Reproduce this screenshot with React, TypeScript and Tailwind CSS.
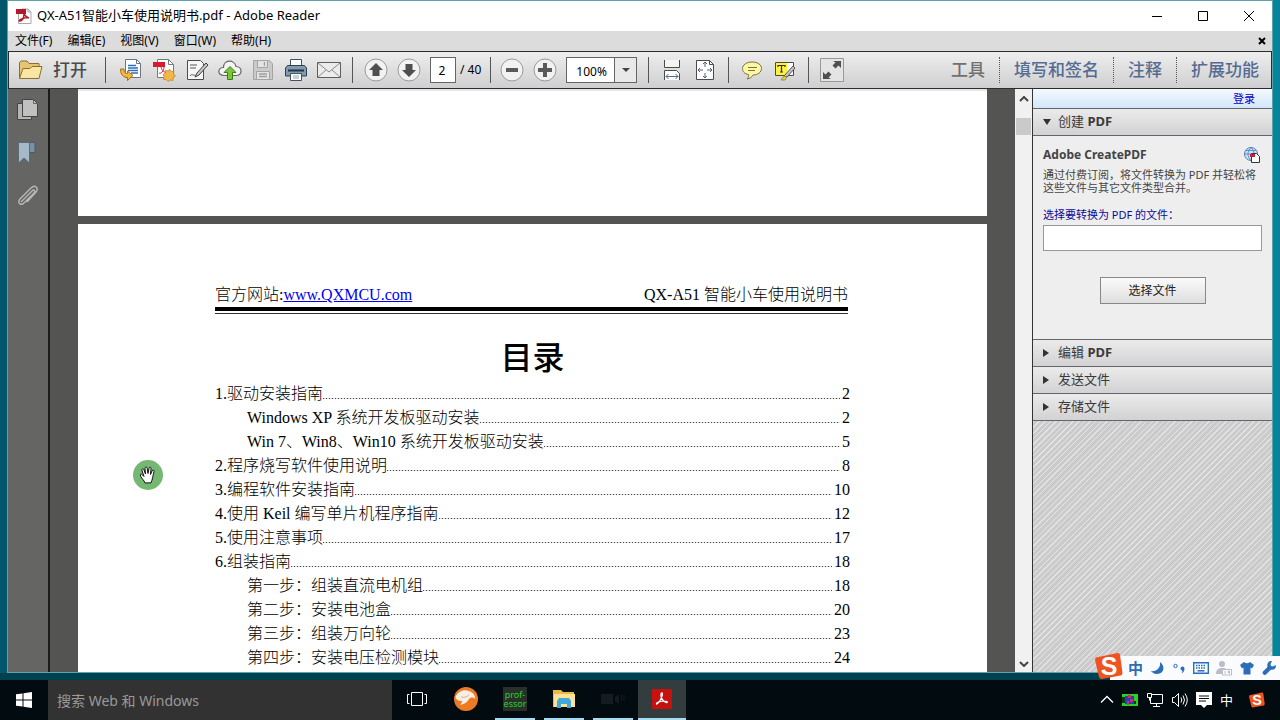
import type { ReactNode } from "react";

type TocEntry = {
  title: string;
  page: number;
  nested?: boolean;
};

const toc: TocEntry[] = [
  { title: "1.驱动安装指南", page: 2 },
  { title: "Windows XP 系统开发板驱动安装", page: 2, nested: true },
  { title: "Win 7、Win8、Win10 系统开发板驱动安装", page: 5, nested: true },
  { title: "2.程序烧写软件使用说明", page: 8 },
  { title: "3.编程软件安装指南", page: 10 },
  { title: "4.使用 Keil 编写单片机程序指南", page: 12 },
  { title: "5.使用注意事项", page: 17 },
  { title: "6.组装指南", page: 18 },
  { title: "第一步：组装直流电机组", page: 18, nested: true },
  { title: "第二步：安装电池盒", page: 20, nested: true },
  { title: "第三步：组装万向轮", page: 23, nested: true },
  { title: "第四步：安装电压检测模块", page: 24, nested: true },
];

const menus = ["文件(F)", "编辑(E)", "视图(V)", "窗口(W)", "帮助(H)"];

function Divider({ tight }: { tight?: boolean }) {
  return (
    <span
      className={`h-[26px] w-px shrink-0 bg-[#555] ${tight ? "mx-[9px]" : "mx-[11px]"}`}
    />
  );
}

function ToolButton({ label, children }: { label: string; children: ReactNode }) {
  return (
    <button type="button" aria-label={label} className="size-6 shrink-0">
      <svg viewBox="0 0 24 24" fill="none" className="size-6">
        {children}
      </svg>
    </button>
  );
}

function RoundBase() {
  return <circle cx="12" cy="12" r="11" fill="#f2f2f2" stroke="#9a9a9a" />;
}

function TitleBar() {
  return (
    <header className="flex h-[30px] shrink-0 items-center bg-white pl-2">
      <svg viewBox="0 0 16 16" fill="none" className="size-4 shrink-0">
        <path d="M2.500 5v10.500h12.500V4l-3-3H6" fill="#fff" stroke="#a8a8a8" />
        <path d="M12 1v3h3" stroke="#a8a8a8" />
        <path d="M0 1h10v5H0z" fill="#b5172b" />
        <path
          d="M7 3c1 4 3 6 6 7M8 6c0 4-2 7-4 7s1-3 8-3.500"
          stroke="#b5172b"
          strokeWidth="1.500"
        />
      </svg>
      <h1 className="ml-[5px] text-[13px]">QX-A51智能小车使用说明书.pdf - Adobe Reader</h1>
      <div className="ml-auto flex">
        <button type="button" aria-label="最小化" className="flex h-7 w-[46px] items-center justify-center">
          <svg viewBox="0 0 12 12" className="size-3" stroke="#000">
            <path d="M1 6.500h10" />
          </svg>
        </button>
        <button type="button" aria-label="最大化" className="flex h-7 w-[46px] items-center justify-center">
          <svg viewBox="0 0 12 12" className="size-3" stroke="#000" fill="none">
            <path d="M1.500 1.500h9v9h-9z" />
          </svg>
        </button>
        <button type="button" aria-label="关闭" className="flex h-7 w-[46px] items-center justify-center">
          <svg viewBox="0 0 12 12" className="size-3" stroke="#000">
            <path d="M1 1l10 10M11 1L1 11" />
          </svg>
        </button>
      </div>
    </header>
  );
}

function MenuBar() {
  return (
    <nav className="flex h-5 shrink-0 items-center bg-[#dcdcdc] pr-1.5 pl-[7px]">
      <div className="flex gap-[15px] text-xs">
        {menus.map((m) => (
          <button key={m} type="button" className="leading-4">
            {m}
          </button>
        ))}
      </div>
      <button type="button" aria-label="关闭文档" className="ml-auto">
        <svg viewBox="0 0 8 8" className="size-2" stroke="#000" strokeWidth="2">
          <path d="M1 1l6 6M7 1L1 7" />
        </svg>
      </button>
    </nav>
  );
}

function ToolBar() {
  return (
    <div className="flex h-[38px] shrink-0 items-center border border-[#2c2c2c] bg-linear-to-b from-[#eeeeee] to-[#cfcfd1] pl-[9px]">
      <button type="button" className="flex shrink-0 items-center gap-2.5 text-[17px] font-medium text-[#4a4a4a]">
        <svg viewBox="0 0 25 20" fill="none" className="h-5 w-[25px]">
          <path d="M1.500 18V2.500L3 1h6l2 2.500h10V7" fill="#e3c572" stroke="#8c6f2c" />
          <path d="M1.500 18.500l3.500-10h7l2-2h10l-3 12z" fill="#fae6a4" stroke="#8c6f2c" />
        </svg>
        打开
      </button>
      <span className="mr-[13px] ml-[18px] h-[26px] w-px shrink-0 bg-[#555]" />

      <div className="flex gap-[9px]">
        <ToolButton label="转换文件">
          <path d="M6.500 1.500h11l4 4v14h-15z" fill="#fff" stroke="#6b7480" />
          <path d="M17.500 1.500v4h4" stroke="#6b7480" />
          <path d="M9 7.500h8M9 10h10M9 12.500h10M12 15h7" stroke="#2f6fb5" strokeWidth="1.300" />
          <path
            d="M1.500 11c0 6 3 8.500 7 8.500v3l5.500-5-5.500-4.500v2.500c-2 0-3.500-1-3.500-4.500z"
            fill="#f3b53c"
            stroke="#a3701a"
          />
        </ToolButton>
        <ToolButton label="创建 PDF">
          <path d="M5.500 1.500h11l5 5v13h-16z" fill="#fff" stroke="#77777c" />
          <path d="M16.500 1.500v5h5" stroke="#77777c" />
          <path d="M1 4h12v5H1z" fill="#d8192f" />
          <path d="M9 9c1 4 3 5 6 6M12 9c0 4-3 7-5 6" stroke="#d8192f" />
          <path
            d="M17.500 11l1.500 2.500 3-.5-.5 3 2 2-2.500 1.500v3l-3-.5-2 1.500-2-2-2.500 0 .5-3-1-2 2.500-1.500 0-2.500 3 .5z"
            fill="#f2b748"
            stroke="#b58222"
            strokeWidth=".7"
          />
        </ToolButton>
        <ToolButton label="签名">
          <path d="M2.500 2.500h13l3 3v16h-16z" fill="#f7f7f7" stroke="#4b4b4b" />
          <path d="M5 7h7M5 10h6M5 18c2-3 3 0 5-1" stroke="#555" />
          <path d="M21 5l2 2-9 10-4 2 2-4z" fill="#c9c9c9" stroke="#3f3f3f" />
        </ToolButton>
        <ToolButton label="上传">
          <path
            d="M6 17.500c-7 0-6.500-8-.5-8 0-8 11-8.500 12.500-1 6.500 0 7 9 0 9z"
            fill="#f4f4f4"
            stroke="#646464"
            strokeWidth="1.200"
          />
          <path d="M12 8.500l6 6h-3.500v7h-5v-7H6z" fill="#7cc63a" stroke="#3b7d17" />
        </ToolButton>
        <ToolButton label="保存">
          <path d="M2.500 2.500h16l3 3v16h-19z" fill="#cacaca" stroke="#a4a4a4" />
          <path d="M6.500 2.500h10v7h-10zM5.500 13.500h13v8h-13z" fill="#e3e3e3" stroke="#a4a4a4" />
          <path d="M13.500 4v4M8 16h8M8 18.500h8" stroke="#a0a0a0" strokeWidth="1.300" />
        </ToolButton>
        <ToolButton label="打印">
          <path d="M6.500 9V1.500h11V9" fill="#fff" stroke="#44505b" />
          <path d="M1.500 10l2-2.500h17l2 2.500v8h-21z" fill="#7f9cb2" stroke="#2f3f4d" />
          <path d="M4 12.500h16" stroke="#28343f" strokeWidth="2" />
          <path d="M6.500 15.500h11v7h-11z" fill="#fff" stroke="#44505b" />
          <path d="M9 18h6M9 20h6" stroke="#90a4b5" />
        </ToolButton>
        <ToolButton label="电子邮件">
          <path d="M.5 4.500h23v15H.5z" fill="#ececec" stroke="#5e5e5e" />
          <path d="M1 5l11 9L23 5M1 19l8-7M23 19l-8-7" stroke="#8a8a8a" />
        </ToolButton>
      </div>
      <Divider />

      <div className="flex shrink-0 items-center gap-[9px]">
        <ToolButton label="上一页">
          <RoundBase />
          <path d="M12 5l7 7h-3.500v6h-7v-6H5z" fill="#4f4f4f" />
        </ToolButton>
        <ToolButton label="下一页">
          <RoundBase />
          <path d="M12 19l7-7h-3.500V6h-7v6H5z" fill="#4f4f4f" />
        </ToolButton>
        <div className="flex items-center gap-1 text-xs">
          <input
            aria-label="页码"
            defaultValue="2"
            className="h-[26px] w-[26px] border border-[#666] bg-white pr-0.5 text-center"
          />
          <span className="whitespace-nowrap">/ 40</span>
        </div>
      </div>
      <Divider tight />

      <div className="flex shrink-0 items-center gap-[9px]">
        <ToolButton label="缩小">
          <RoundBase />
          <path d="M6 10h12v4H6z" fill="#5a5a5a" />
        </ToolButton>
        <ToolButton label="放大">
          <RoundBase />
          <path d="M10 5h4v5h5v4h-5v5h-4v-5H5v-4h5z" fill="#5a5a5a" />
        </ToolButton>
        <div className="relative h-[26px] w-[71px] border border-[#666] bg-white">
          <select aria-label="缩放" className="h-full w-full appearance-none pb-0.5 pl-[9px] text-xs">
            <option>100%</option>
          </select>
          <span className="pointer-events-none absolute inset-y-0 right-0 flex w-[22px] items-center justify-center border-l border-[#666] bg-[#e9e9e9]">
            <svg viewBox="0 0 8 4" className="h-1 w-2" fill="#444">
              <path d="M0 0h8L4 4z" />
            </svg>
          </span>
        </div>
      </div>
      <Divider />

      <div className="flex gap-[9px]">
        <ToolButton label="适合宽度">
          <path d="M4.500 2v7.500h15V2" fill="#f5f5f5" stroke="#4a4a4a" />
          <path d="M4.500 22v-9.500h12l3 3V22" fill="#fff" stroke="#4a4a4a" />
          <path d="M6 18.500h12M8.500 16L6 18.500 8.500 21M15.500 16l2.500 2.500-2.500 2.500" stroke="#52698a" />
        </ToolButton>
        <ToolButton label="适合页面">
          <path d="M3.500 2.500h13l4 4v15h-17z" fill="#fff" stroke="#4a4a4a" />
          <path d="M16.500 2.500v4h4" stroke="#4a4a4a" />
          <path
            d="M12 4v5M12 15v5M5 12h5M14 12h5M10 6l2-2 2 2M10 18l2 2 2-2M7 10l-2 2 2 2M17 10l2 2-2 2"
            stroke="#4c6588"
          />
        </ToolButton>
      </div>
      <Divider />

      <div className="flex gap-[9px]">
        <ToolButton label="附注">
          <path
            d="M12 4c6 0 9.500 3 9.500 6.500S18 17 13 17c-1 2-3 3.500-6 4 1.500-1.500 2-3 1.500-4.500-4-.5-6-3-6-6C2.500 7 6.500 4 12 4z"
            fill="#fbf7a4"
            stroke="#7d7244"
          />
          <path d="M8 9.500h9M8 12.500h7" stroke="#7d7332" />
        </ToolButton>
        <ToolButton label="高亮文本">
          <path d="M2.500 4.500h18v13h-18z" fill="#fff" stroke="#4a4a4a" />
          <path d="M3 5h11v12H3z" fill="#fff23d" />
          <path d="M5 7.500h7M5 7v2M12 7v2M8.500 7v7M7 14h3" stroke="#333" strokeWidth="1.200" />
          <path d="M20 8l2 2-8 9-3-1z" fill="#c4c4c4" stroke="#555" />
          <path d="M11 18l3 1-2 3H8z" fill="#e8d33a" stroke="#80742a" strokeWidth=".7" />
        </ToolButton>
      </div>
      <Divider />

      <ToolButton label="阅读模式">
        <path d="M.5.5h23v23H.5z" fill="#e4e4e4" stroke="#999" />
        <path d="M21 3v7l-2.500-2.500-3 3-3-3 3-3L13 3zM3 21v-7l2.500 2.500 3-3 3 3-3 3L11 21z" fill="#505050" />
      </ToolButton>

      <div className="ml-auto flex shrink-0 text-[17px] leading-[26px] font-medium text-[#546c92]">
        <button type="button" className="px-[14px] text-[#707070]">
          工具
        </button>
        <button type="button" className="border-l border-dotted border-[#555] px-[14px]">
          填写和签名
        </button>
        <button type="button" className="border-l border-dotted border-[#555] px-[14px]">
          注释
        </button>
        <button type="button" className="border-l border-dotted border-[#555] pr-3 pl-[14px]">
          扩展功能
        </button>
      </div>
    </div>
  );
}

function NavPane() {
  return (
    <aside className="flex w-[42px] shrink-0 flex-col items-start gap-[19px] border-r-2 border-[#1c1c1c] bg-[#656563] pt-[9px] pl-[7px]">
      <button type="button" aria-label="页面缩略图">
        <svg viewBox="0 0 24 24" fill="none" className="size-6">
          <path d="M2.500 5.500h14v16h-14z" fill="#b5b5b5" stroke="#444" />
          <path d="M7.500 1.500h11l4 4v13h-15z" fill="#c0c0c0" stroke="#444" />
          <path d="M18.500 1.500v4h4" stroke="#666" />
        </svg>
      </button>
      <button type="button" aria-label="书签">
        <svg viewBox="0 0 24 24" fill="none" className="size-6">
          <path d="M13 1.500h7v10h-7z" fill="#7791a5" stroke="#4c5b67" />
          <path d="M3.500 1.500h11v20.500l-5.500-5-5.500 5z" fill="#a5b9c8" stroke="#5b6b77" />
        </svg>
      </button>
      <button type="button" aria-label="附件">
        <svg viewBox="0 0 24 24" fill="none" className="size-6" stroke="#b8b8b8" strokeWidth="1.400">
          <path d="M8 16l9-9c2-2 4 0 2 2L9 19c-3 3-7 0-4-4L16 4c4-4 8 0 5 4l-9 10M6 18l9-9" />
        </svg>
      </button>
    </aside>
  );
}

function Document() {
  return (
    <main className="relative min-w-0 flex-1 overflow-hidden bg-[#545452] px-7 font-['Liberation_Serif','Noto_Sans_CJK_SC',serif] text-base font-light text-black">
      <div className="h-[127px] border-t-2 border-[#e6e6e6] bg-white" />
      <article className="mt-2 bg-white px-[137px] pt-[59px] pb-10">
        <div className="mr-0.5 flex justify-between leading-6">
          <p>
            官方网站:
            <a href="http://www.QXMCU.com" className="text-[#0000f0] underline">
              www.QXMCU.com
            </a>
          </p>
          <p>QX-A51 智能小车使用说明书</p>
        </div>
        <div className="mr-0.5 h-[7px] border-t-4 border-b border-t-black border-b-[#333]" />
        <h2 className="mt-5 text-center text-[32px] leading-[48px] font-medium">目录</h2>
        <ul>
          {toc.map((entry) => (
            <li key={entry.title}>
              <a
                href={`#page-${entry.page}`}
                className={`flex h-6 items-baseline leading-6 ${entry.nested ? "pl-8" : ""}`}
              >
                <span className="shrink-0">{entry.title}</span>
                <span className="h-px min-w-0 flex-1 bg-[repeating-linear-gradient(90deg,#444_0_1px,#ddd_1px_3px)]" />
                <span className="shrink-0 pl-0.5">{entry.page}</span>
              </a>
            </li>
          ))}
        </ul>
      </article>
      {/* hand tool pointer with click highlight */}
      <svg viewBox="0 0 30 30" fill="none" className="absolute top-[371px] left-[83px] size-[30px]">
        <circle cx="15" cy="15" r="15" fill="#74b874" />
        <path
          d="M12 23c-1-3-3-4-4.500-7-1-2 1-2.500 2-1l1.500 1.500-2-6c-.5-2 1.500-2.500 2-.5l1.500 4-.5-5.500c0-2 2-2 2.200 0l.8 5 1-5c.5-2 2.300-1.500 2 .3l-.5 5.700 1.500-3.500c1-1.700 2.500-1 2 .8-1 3-1.500 8-3 11z"
          fill="#fff"
          stroke="#111"
        />
      </svg>
    </main>
  );
}

function ScrollBar() {
  return (
    <div className="flex w-[17px] shrink-0 flex-col items-center bg-[#f1f1f1]">
      <svg viewBox="0 0 10 6" fill="none" className="mt-[7px] h-1.5 w-2.5" stroke="#444" strokeWidth="2">
        <path d="M1 5l4-4 4 4" />
      </svg>
      <div className="mt-4 h-[17px] w-[15px] bg-[#cacaca]" />
      <svg viewBox="0 0 10 6" fill="none" className="mt-auto mb-[5px] h-1.5 w-2.5" stroke="#444" strokeWidth="2">
        <path d="M1 1l4 4 4-4" />
      </svg>
    </div>
  );
}

function PanelHeader({ open, children }: { open?: boolean; children: ReactNode }) {
  return (
    <button
      type="button"
      className="flex h-[27px] w-full shrink-0 items-center gap-[6px] border-b border-[#66666a] bg-linear-to-b from-[#ebebec] to-[#d2d2d4] pl-[9px] text-[13px] text-[#3a3a3a]"
    >
      <svg viewBox="0 0 10 10" className="size-2.5" fill="#333">
        {open ? <path d="M1 2h8L5 8z" /> : <path d="M1 1v8l6-4z" />}
      </svg>
      <span>{children}</span>
    </button>
  );
}

function ToolsPanel() {
  return (
    <aside className="flex w-60 shrink-0 flex-col border-l border-[#333] bg-[repeating-linear-gradient(135deg,#cbcbcb_0_3px,#e4e4e4_3px_4px)]">
      <div className="flex h-5 shrink-0 items-center justify-end border-b border-[#66666a] bg-linear-to-b from-[#f4f9fe] to-[#d3e7fa] pr-[17px]">
        <a href="#login" className="text-[11px] leading-4 text-[#0000c8]">
          登录
        </a>
      </div>
      <PanelHeader open>
        创建 <b>PDF</b>
      </PanelHeader>
      <section className="flex h-[204px] shrink-0 flex-col border-b border-[#66666a] bg-[#eee] px-2.5 pt-2.5 text-[11px] leading-[13px] text-[#444]">
        <div className="mb-1 flex h-[18px] items-center justify-between">
          <h2 className="text-xs font-bold">Adobe CreatePDF</h2>
          <svg viewBox="0 0 18 18" fill="none" className="mr-px size-[18px]">
            <circle cx="8" cy="8" r="6.500" fill="#cfe0f2" stroke="#4a7fc0" />
            <path d="M8 1.500c-4 4-4 9 0 13M8 1.500c4 4 4 9 0 13M1.500 8h13M3 4.500h10" stroke="#4a7fc0" strokeWidth=".8" />
            <path d="M8.500 7.500h5l3 3v6h-8z" fill="#fff" stroke="#333" />
            <path d="M7 8h5v3H7z" fill="#cc1f35" />
          </svg>
        </div>
        <p>通过付费订阅，将文件转换为 PDF 并轻松将这些文件与其它文件类型合并。</p>
        <label htmlFor="source-file" className="mt-[14px] text-[#0a0a96]">
          选择要转换为 PDF 的文件：
        </label>
        <input id="source-file" type="text" className="mt-1 h-[26px] w-full border border-[#999] bg-white px-1" />
        <button
          type="button"
          className="mt-[26px] h-[27px] w-[106px] self-center border border-[#888] bg-linear-to-b from-[#fbfbfb] to-[#dedede] text-xs text-[#222]"
        >
          选择文件
        </button>
      </section>
      <PanelHeader>
        编辑 <b>PDF</b>
      </PanelHeader>
      <PanelHeader>发送文件</PanelHeader>
      <PanelHeader>存储文件</PanelHeader>
    </aside>
  );
}

function SogouLogo({ className }: { className: string }) {
  return (
    <svg viewBox="0 0 28 28" className={className}>
      <path d="M1 5.500L22.500 1q2-.3 2.500 1.700L27.500 21q0 2-2 2.500L7 27q-2.500.3-3-2L0 8q0-2 1-2.500z" fill="#f0531f" />
      <text
        x="14"
        y="22.500"
        textAnchor="middle"
        fontSize="25"
        fontWeight="700"
        fill="#fff"
        fontFamily="Liberation Sans, sans-serif"
      >
        S
      </text>
    </svg>
  );
}

function InputMethodBar() {
  return (
    <div className="absolute right-0 bottom-10 flex h-7 items-end">
      <div className="flex h-6 w-[170px] items-center justify-between bg-[#fafcff] pr-1 pl-[18px] text-[#2a6db8]">
        <span className="text-[15px] leading-6 font-bold">中</span>
        <svg viewBox="0 0 14 14" className="size-[14px]" fill="currentColor">
          <path d="M9 1c5 3 5 12-3 12-3 0-5-1.500-6-3 5 1 10-3 9-9z" />
        </svg>
        <svg viewBox="0 0 12 14" className="h-[14px] w-3" fill="none">
          <circle cx="2.500" cy="5" r="1.700" stroke="currentColor" />
          <path d="M7.500 7.500a2 2 0 1 1 4 0c0 2-1 4-3 5 .5-1 1-2 .8-3-1 0-1.800-1-1.800-2z" fill="currentColor" />
        </svg>
        <svg viewBox="0 0 16 12" className="h-3 w-4" fill="none" stroke="currentColor">
          <path d="M.7.700h14.600v10.600H.7z" strokeWidth="1.400" />
          <path d="M3 3.500h10M3 6h10" strokeDasharray="1.500 1" strokeWidth="1.500" />
          <path d="M4.500 8.800h7" strokeWidth="1.500" />
        </svg>
        <svg viewBox="0 0 16 16" className="size-4" fill="#b9bccb">
          <circle cx="6" cy="4" r="3" />
          <path d="M0 14c0-4 2-6 6-6s5 1 6 3v3z" />
          <path d="M6.500 9.500h9v5.500h-9z" fill="#fff" stroke="#b9bccb" />
          <path d="M9 11v3M12 11h1.500v3M12 11v1.500h1.500" fill="none" stroke="#b9bccb" />
        </svg>
        <svg viewBox="0 0 14 14" className="size-[14px]" fill="currentColor">
          <path d="M4 1q3 2.500 6 0l4 3-2 3.500-1.500-1V13.500h-7V6.500L2 7.500 0 4z" />
        </svg>
        <svg viewBox="0 0 14 14" className="size-[14px]" fill="currentColor">
          <path d="M9 0l1 .2L8.500 3 9 5l2 .5L13.800 4c.8 3-2 5.500-5 4.700L4 13.500c-2 1.300-4.500-1-3-3L5.500 6C4.500 3 6.500 0 9 0z" />
        </svg>
      </div>
      <SogouLogo className="absolute bottom-0 -left-[15px] size-7" />
    </div>
  );
}

function TaskTile({
  label,
  active,
  running,
  children,
}: {
  label: string;
  active?: boolean;
  running?: boolean;
  children: ReactNode;
}) {
  return (
    <button
      type="button"
      aria-label={label}
      className={`flex h-10 w-12 shrink-0 flex-col items-center ${active ? "bg-[#343d3d]" : ""}`}
    >
      <span className="flex h-[38px] items-center justify-center">{children}</span>
      {(running || active) && (
        <span className={`h-0.5 bg-[#a6dcf0] ${active ? "w-12" : "w-10"}`} />
      )}
    </button>
  );
}

function TaskBar() {
  return (
    <footer className="flex h-10 shrink-0 items-center bg-[#020b0f]">
      <button type="button" aria-label="开始" className="flex h-10 w-12 shrink-0 items-center justify-center">
        <svg viewBox="0 0 16 16" className="size-4" fill="#fff">
          <path d="M0 2.300L6.500 1.400v6.100H0zM7.500 1.200L16 0v7.500H7.500zM0 8.500h6.500v6.100L0 13.700zM7.500 8.500H16V16l-8.500-1.200z" />
        </svg>
      </button>
      <input
        aria-label="搜索"
        placeholder="搜索 Web 和 Windows"
        className="h-10 w-[344px] min-w-0 bg-[#323232] px-[9px] text-sm placeholder:text-[#999]"
      />
      <div className="ml-px flex gap-px">
        <TaskTile label="任务视图">
          <svg viewBox="0 0 20 16" className="h-4 w-5" fill="none" stroke="#fff">
            <path d="M4.500 1.500h11v13h-11zM2.500 3.500H.5v9h2M17.500 3.500h2v9h-2" />
          </svg>
        </TaskTile>
        <TaskTile label="浏览器">
          <svg viewBox="0 0 24 24" className="size-6">
            <circle cx="12" cy="12" r="12" fill="#ec7a22" />
            <path
              d="M1.500 10C4 4 10 2 15 4c4 1.500 6 4 6.500 8-2-2-5-2-6.500 0-1.500 3-5 6-9 5.500 1-1 2-2 2-3.500-3 0-6-1-6.500-4z"
              fill="#f8ede4"
            />
            <path d="M7 10c3 1 6 0 8-2" stroke="#d7b294" fill="none" />
          </svg>
        </TaskTile>
        <TaskTile label="professor" running>
          <span className="flex size-6 flex-col justify-center bg-[#2b2f2b] text-center text-[9px] leading-[9px] text-[#22d422]">
            <span>prof-</span>
            <span>essor</span>
          </span>
        </TaskTile>
        <TaskTile label="文件资源管理器" running>
          <svg viewBox="0 0 22 20" className="h-5 w-[22px]">
            <path d="M0 1h8l2 2h11v15H0z" fill="#e9b94c" />
            <path d="M1 5h21v13H1z" fill="#fbe296" />
            <path d="M4 19v-7l2-3h10l2 3v7h-4v-4H8v4z" fill="#3fa9de" />
          </svg>
        </TaskTile>
        <TaskTile label="录像" running>
          <svg viewBox="0 0 24 16" className="h-4 w-6" fill="#141c20">
            <path d="M0 3h12v10H0zM14 6l4-3v10l-4-3zM20 4h1v6h-1zM22.500 4h1v6h-1z" />
          </svg>
        </TaskTile>
        <TaskTile label="Adobe Reader" active>
          <svg viewBox="0 0 20 20" className="size-5" fill="none">
            <path d="M0 0h20v20H0z" fill="#c5120f" />
            <path
              d="M9.500 4c2-.5.500 4-1.500 7.500-1 2-3 4-3.500 3.500C4 13.500 9 12 12 12c3 0 4 1 3 1.600-1.500.5-5-2.600-5.800-5.600-.4-2-.5-3.700.3-4z"
              stroke="#fff"
              strokeWidth="1.200"
            />
          </svg>
        </TaskTile>
      </div>

      <div className="ml-auto flex shrink-0 items-center gap-2 pr-[15px] text-white">
        <svg viewBox="0 0 14 14" className="size-[14px]" fill="none" stroke="currentColor" strokeWidth="1.300">
          <path d="M1 9.500l6-6 6 6" />
        </svg>
        <svg viewBox="0 0 16 14" className="h-[14px] w-4">
          <path d="M0 1h16v12H0z" fill="#20d81e" />
          <path d="M0 4h3v6H0zM11 8h3v3h-3z" fill="#0b3a12" />
          <path d="M3 3h9v8H3z" fill="#273fbe" />
          <path d="M6 2h3v3H6zM8 6h3v3H8zM5 8h2v4H5z" fill="#d02872" />
        </svg>
        <svg viewBox="0 0 18 16" className="h-4 w-[18px]" fill="none" stroke="currentColor">
          <path d="M6 2.500h10.500v9H4.500V6M10.500 11.500v3M7 14.500h7M1.500 1.500h4v4h-4zM3.500 5.500v3" />
        </svg>
        <svg viewBox="0 0 16 16" className="size-4" fill="none" stroke="currentColor">
          <path d="M.5 5.500h2l4-4v13l-4-4h-2zM9 5.500q1.500 2.500 0 5M11 3.500q3 4.500 0 9M13 1.500q4.500 6.500 0 13" />
        </svg>
        <svg viewBox="0 0 16 16" className="size-4" fill="currentColor">
          <path d="M0 0h16v13h-5l-3 3-3-3H0z" />
          <path d="M3 4h10M3 6.500h10M3 9h7" stroke="#020b0f" />
        </svg>
        <span className="text-[13px] leading-5">中</span>
        <SogouLogo className="ml-2 size-4" />
      </div>
    </footer>
  );
}

export default function App() {
  return (
    <div className="relative flex h-screen flex-col bg-linear-to-r from-[#00566b] from-50% to-[#06859a] font-['Noto_Sans','Noto_Sans_CJK_SC',sans-serif] text-black">
      <div className="mx-[7px] flex min-h-0 flex-1 flex-col border border-[#5ba3ad]">
        <TitleBar />
        <MenuBar />
        <ToolBar />
        <div className="flex min-h-0 flex-1">
          <NavPane />
          <Document />
          <ScrollBar />
          <ToolsPanel />
        </div>
      </div>
      <div className="h-[7px] shrink-0 bg-[#00414f]" />
      <InputMethodBar />
      <TaskBar />
    </div>
  );
}
